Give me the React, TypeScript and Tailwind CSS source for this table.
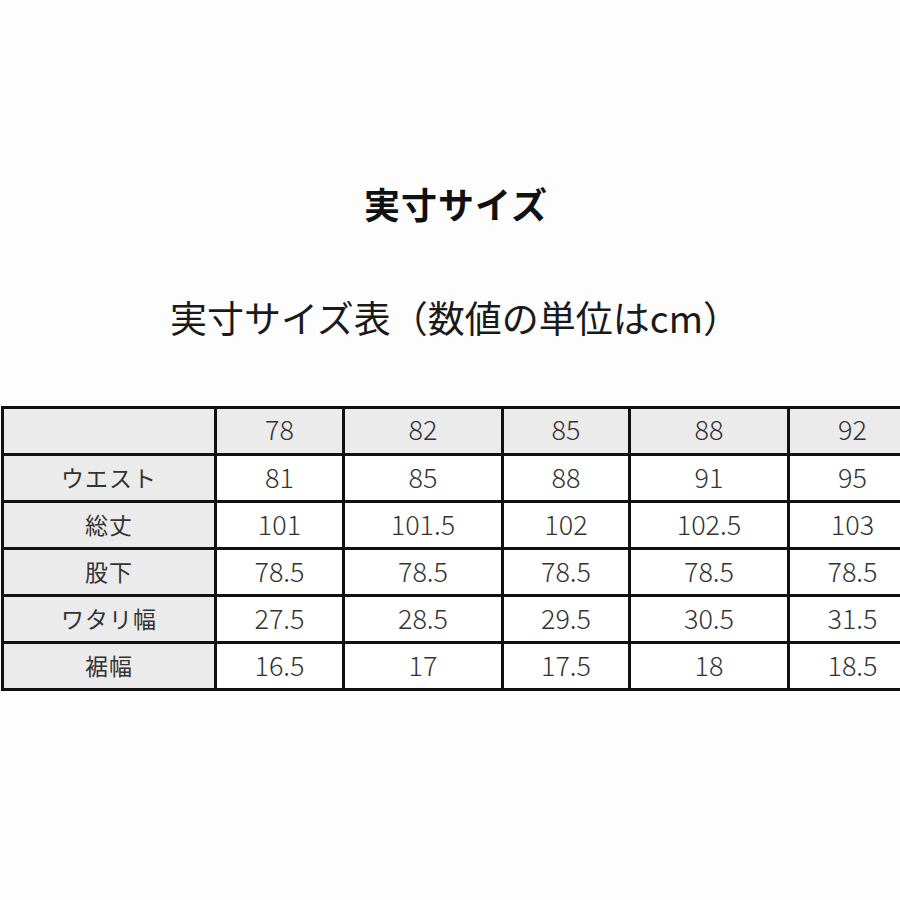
const sizes = ['78', '82', '85', '88', '92'];

const rows = [
  { label: 'ウエスト', values: ['81', '85', '88', '91', '95'] },
  { label: '総丈', values: ['101', '101.5', '102', '102.5', '103'] },
  { label: '股下', values: ['78.5', '78.5', '78.5', '78.5', '78.5'] },
  { label: 'ワタリ幅', values: ['27.5', '28.5', '29.5', '30.5', '31.5'] },
  { label: '裾幅', values: ['16.5', '17', '17.5', '18', '18.5'] },
];

const font = { fontFamily: '"Noto Sans CJK JP", "Noto Sans", sans-serif' };

export default function App() {
  return (
    <div
      className="w-[900px] h-[900px] overflow-hidden bg-[#fdfdfd] flex flex-col items-center"
      style={font}
    >
      <h1 className="mt-[185px] pl-[12px] h-[36px] text-[36px] leading-[36px] font-bold text-[#111] tracking-[1px]">
        実寸サイズ
      </h1>
      <p className="mt-[78px] pl-[10px] h-[37px] text-[37px] leading-[37px] text-[#1a1a1a]">
        実寸サイズ表（数値の単位はcm）
      </p>

      {/* size table, runs off the right edge */}
      <div className="mt-[70px] self-start ml-[1px] w-[925px] bg-[#111] p-[3px]">
        <div className="grid grid-cols-[210px_125px_156px_124px_156px_125px] auto-rows-[44px] gap-[3px] text-[#333] text-[27px] font-light">
          <div className="bg-[#ebebeb]" />
          {sizes.map((s) => (
            <div key={s} className="bg-[#ebebeb] flex items-center justify-center pb-[3px]">
              {s}
            </div>
          ))}
          {rows.map((row) => (
            <>
              <div key={row.label} className="bg-[#ebebeb] flex items-center justify-center pb-[2px] text-[23px] font-normal tracking-[1px]">
                {row.label}
              </div>
              {row.values.map((v, i) => (
                <div key={row.label + i} className="bg-white flex items-center justify-center pb-[2px]">
                  {v}
                </div>
              ))}
            </>
          ))}
        </div>
      </div>
    </div>
  );
}
